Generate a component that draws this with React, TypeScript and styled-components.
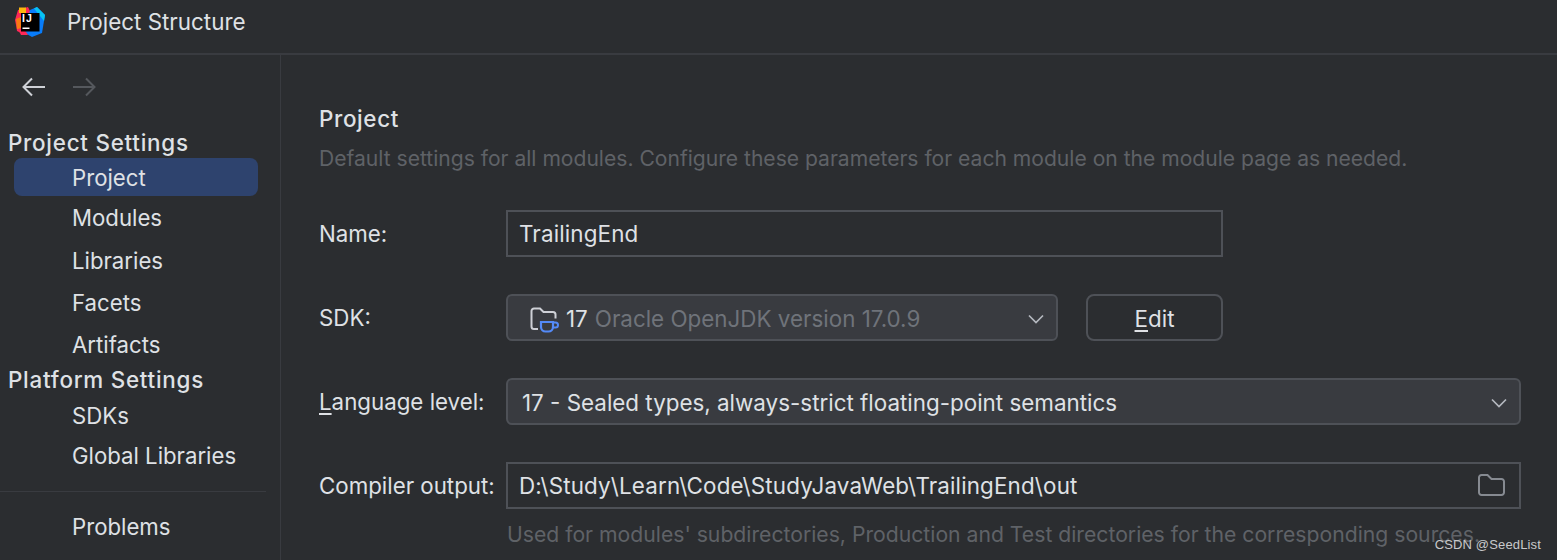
import React from 'react'
import styled, { createGlobalStyle } from 'styled-components'

const GlobalStyle = createGlobalStyle`
  html, body {
    margin: 0;
    padding: 0;
    height: 100%;
    overflow: hidden;
    background: #2b2d30;
  }
  body {
    font-family: Inter, "Noto Sans", sans-serif;
    color: #dfe1e5;
  }
`

const Page = styled.div`
  position: relative;
  width: 1557px;
  height: 560px;
  overflow: hidden;
  display: flex;
  flex-direction: column;
`

const TitleBar = styled.header`
  display: flex;
  align-items: center;
  gap: 22px;
  flex: none;
  box-sizing: border-box;
  height: 55px;
  padding: 0 0 10px 15px;
  border-bottom: 2px solid #393b40;
`

const Title = styled.div`
  font-size: 22.4px;
  color: #dfe1e5;
`

const Body = styled.div`
  display: flex;
  flex: 1;
  min-height: 0;
`

const Sidebar = styled.aside`
  width: 281px;
  flex: none;
  box-sizing: border-box;
  border-right: 1px solid #393b40;
`

const NavArrows = styled.div`
  display: flex;
  gap: 26px;
  height: 24px;
  margin: 20px 0 0 22px;
`

const SectionTitle = styled.div<{ $top: number }>`
  margin: ${p => p.$top}px 0 0 8px;
  height: 30px;
  line-height: 30px;
  font-size: 22.4px;
  font-weight: 500;
  letter-spacing: 0.75px;
  color: #dfe1e5;
`

const NavRow = styled.div<{ $active?: boolean; $h: number }>`
  height: ${p => p.$h}px;
  line-height: ${p => p.$h + 1}px;
  margin: 0 22px 0 14px;
  padding-left: 58px;
  border-radius: 8px;
  font-size: 22.2px;
  color: #dfe1e5;
  background: ${p => (p.$active ? '#2e436e' : 'transparent')};
`

const SideDivider = styled.div`
  height: 1px;
  margin: 16px 14px 15px 0;
  background: #393b40;
`

const Main = styled.main`
  flex: 1;
  min-width: 0;
  padding: 49px 0 0 38px;
`

const Heading = styled.div`
  height: 30px;
  line-height: 30px;
  font-size: 22.4px;
  font-weight: 500;
  letter-spacing: 0.65px;
  color: #dfe1e5;
`

const Description = styled.div`
  margin-top: 10px;
  height: 30px;
  line-height: 30px;
  font-size: 21.08px;
  color: #5f6267;
  white-space: nowrap;
`

const FormGrid = styled.div`
  display: grid;
  grid-template-columns: 187px 1015px;
  grid-auto-rows: 46px;
  row-gap: 38px;
  margin-top: 36px;
`

const Label = styled.label`
  display: flex;
  align-items: center;
  height: 46px;
  font-size: 22.3px;
  color: #dfe1e5;
  white-space: pre;

  > u {
    text-underline-offset: 3px;
  }
`

const TextField = styled.div<{ $w: number }>`
  display: flex;
  align-items: center;
  justify-content: space-between;
  box-sizing: border-box;
  width: ${p => p.$w}px;
  height: 47px;
  padding: 0 14px 0 11px;
  border: 2px solid #4e5157;
  font-size: 22.4px;
  letter-spacing: 0.15px;
  color: #dfe1e5;
  white-space: nowrap;
`

const SdkRow = styled.div`
  display: flex;
  gap: 28px;
`

const Combo = styled.div<{ $w: number }>`
  display: flex;
  align-items: center;
  box-sizing: border-box;
  width: ${p => p.$w}px;
  height: 47px;
  padding: 2px 12px 0 14px;
  background: #393b40;
  border: 2px solid #4e5157;
  border-radius: 6px;
  font-size: 22.4px;
  color: #dfe1e5;
  white-space: nowrap;

  > svg:last-child {
    margin-left: auto;
  }
`

const SdkVersion = styled.span`
  margin-left: 6px;
`

const Muted = styled.span`
  color: #6f737a;
  margin-left: 7px;
`

const EditButton = styled.button`
  box-sizing: border-box;
  width: 137px;
  height: 47px;
  padding: 2px 0 0;
  background: transparent;
  border: 2px solid #4e5157;
  border-radius: 8px;
  font: inherit;
  font-size: 22.4px;
  color: #dfe1e5;

  > u {
    text-underline-offset: 3px;
  }
`

const Hint = styled.div`
  margin: 11px 0 0 188px;
  height: 30px;
  line-height: 30px;
  font-size: 21.18px;
  color: #5f6267;
  white-space: nowrap;
`

const Watermark = styled.div`
  position: absolute;
  right: 16px;
  bottom: 8px;
  font-size: 13px;
  font-family: "Liberation Sans", Arial, sans-serif;
  color: #c8c9cb;
  letter-spacing: 0.15px;
`

const Logo = () => (
  <svg width="30" height="30" viewBox="0 0 30 30">
    <path d="M3 3 L13 0 L16 6 L6 26 L2 24 L1 18 L0 13 Z" fill="#fe2857" />
    <path d="M1 12 L6 10 L6 22 L2 22 Z" fill="#f97a12" />
    <path d="M4 0.5 L11 0.5 L11 6 L4 6 Z" fill="#fdb60d" />
    <path d="M15 3 L22 0 L30 8 L27 26 L17 30 L10 26 Z" fill="#087cfa" />
    <path d="M19 1.5 L22 0 L30 8 L29 14 Z" fill="#07c3f2" />
    <path d="M3 22 L6 28 L13 28 L8 20 Z" fill="#fe2857" />
    <rect x="6" y="6" width="18.5" height="18.5" fill="#000" />
    <text x="7" y="15" fontFamily="Liberation Sans, sans-serif" fontSize="10.5" fontWeight="700" letterSpacing="1.2" fill="#fff">IJ</text>
    <rect x="7.5" y="20.5" width="7" height="1.5" fill="#fff" />
  </svg>
)

const Arrow = ({ color, flip }: { color: string; flip?: boolean }) => (
  <svg width="24" height="24" viewBox="0 0 24 24" fill="none" stroke={color} strokeWidth="2" style={flip ? { transform: 'scaleX(-1)' } : undefined}>
    <path d="M1 12 H23 M10 3.5 L1.5 12 L10 20.5" />
  </svg>
)

const Chevron = () => (
  <svg width="16" height="10" viewBox="0 0 16 10" fill="none" stroke="#b4b8bf" strokeWidth="1.7">
    <path d="M1 1.5 L8 8.5 L15 1.5" />
  </svg>
)

const FolderOutline = () => (
  <svg width="27" height="23" viewBox="0 0 27 23" fill="none" stroke="#868a91" strokeWidth="2">
    <path d="M1 3.5 a2.5 2.5 0 0 1 2.5 -2.5 h6 l4 4 h10 a2.5 2.5 0 0 1 2.5 2.5 v11 a2.5 2.5 0 0 1 -2.5 2.5 h-20 a2.5 2.5 0 0 1 -2.5 -2.5 z" />
  </svg>
)

const SdkIcon = () => (
  <svg width="30" height="28" viewBox="0 0 30 28" fill="none" style={{ flex: 'none', marginLeft: 8 }}>
    <path d="M8 24 H4 a2.5 2.5 0 0 1 -2.5 -2.5 V6 a2.5 2.5 0 0 1 2.5 -2.5 h6 l3.5 3.5 h9.5 a2.5 2.5 0 0 1 2.5 2.5 v4" stroke="#ced0d6" strokeWidth="2" />
    <path d="M11 17 h12 v5 a4.5 4.5 0 0 1 -4.5 4.5 h-3 a4.5 4.5 0 0 1 -4.5 -4.5 z" stroke="#548af7" strokeWidth="2.2" />
    <path d="M23 17.5 h2.5 a2.5 2.5 0 0 1 0 5 h-2.5" stroke="#548af7" strokeWidth="2" />
  </svg>
)

export default function App() {
  return (
    <Page>
      <GlobalStyle />
      <TitleBar>
        <Logo />
        <Title>Project Structure</Title>
      </TitleBar>
      <Body>
        <Sidebar>
          <NavArrows>
            <Arrow color="#ced0d6" />
            <Arrow color="#55585d" flip />
          </NavArrows>
          <SectionTitle $top={29}>Project Settings</SectionTitle>
          <NavRow $active $h={38}>Project</NavRow>
          <NavRow $h={43}>Modules</NavRow>
          <NavRow $h={42}>Libraries</NavRow>
          <NavRow $h={42}>Facets</NavRow>
          <NavRow $h={42}>Artifacts</NavRow>
          <SectionTitle $top={0}>Platform Settings</SectionTitle>
          <NavRow $h={40}>SDKs</NavRow>
          <NavRow $h={40}>Global Libraries</NavRow>
          <SideDivider />
          <NavRow $h={38}>Problems</NavRow>
        </Sidebar>
        <Main>
          <Heading>Project</Heading>
          <Description>Default settings for all modules. Configure these parameters for each module on the module page as needed.</Description>
          <FormGrid>
            <Label>Name:</Label>
            <TextField $w={717}>TrailingEnd</TextField>
            <Label>SDK:</Label>
            <SdkRow>
              <Combo $w={552}>
                <SdkIcon />
                <SdkVersion>17</SdkVersion>
                <Muted>Oracle OpenJDK version 17.0.9</Muted>
                <Chevron />
              </Combo>
              <EditButton><u>E</u>dit</EditButton>
            </SdkRow>
            <Label><u>L</u>anguage level:</Label>
            <Combo $w={1015}>
              17 - Sealed types, always-strict floating-point semantics
              <Chevron />
            </Combo>
            <Label>Compiler output:</Label>
            <TextField $w={1015}>
              D:\Study\Learn\Code\StudyJavaWeb\TrailingEnd\out
              <FolderOutline />
            </TextField>
          </FormGrid>
          <Hint>Used for modules' subdirectories, Production and Test directories for the corresponding sources.</Hint>
        </Main>
      </Body>
      <Watermark>CSDN @SeedList</Watermark>
    </Page>
  )
}
